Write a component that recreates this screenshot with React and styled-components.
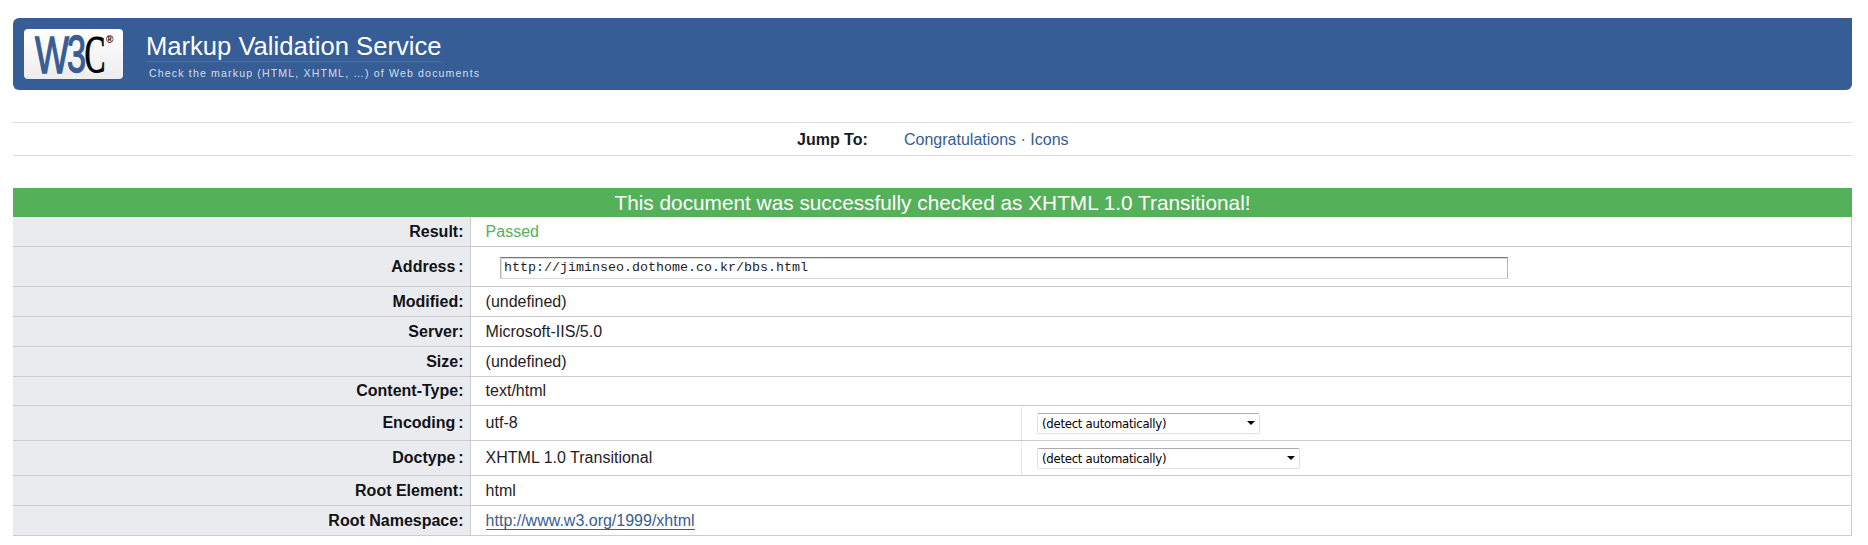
import React from "react";
import styled, { createGlobalStyle } from "styled-components";

const GlobalStyle = createGlobalStyle`
  * { box-sizing: border-box; }
  body {
    margin: 0;
    background: #fff;
    color: #1f2126;
    font: 16px/20px "Liberation Sans", Arial, sans-serif;
  }
  a { color: #365d95; text-decoration: none; }
`;

const Page = styled.div`
  padding: 18px 16px 9px 13px;
`;

const Banner = styled.header`
  display: flex;
  align-items: flex-start;
  height: 72px;
  padding: 11px 11px 0;
  background: #365d95;
  border-radius: 6px 0 6px 6px;
`;

const LogoBadge = styled.div`
  width: 99px;
  height: 50px;
  border-radius: 4px;
  background: linear-gradient(#fff, #ededee);
  svg { display: block; overflow: visible; }
`;

const Titles = styled.div`
  margin-left: 23px;
  color: #fff;
`;

const Title = styled.h1`
  width: 296px;
  height: 33px;
  margin: 0;
  border-bottom: 1px solid #4a709f;
  font-size: 25.6px;
  font-weight: normal;
  line-height: 34px;
  white-space: nowrap;
`;

const Tagline = styled.p`
  margin: 3px 0 0 3px;
  font-size: 10.6px;
  line-height: 16px;
  letter-spacing: 1.14px;
  color: #d3deeb;
  white-space: nowrap;
`;

const JumpBar = styled.nav`
  display: flex;
  align-items: center;
  height: 34px;
  margin: 32px 0;
  padding: 1px 0 0 784px;
  border: solid #dcdcdc;
  border-width: 1px 0;
  b { width: 107px; color: #1a1b1e; }
`;

const Links = styled.span`
  color: #365d95;
`;

const Report = styled.section`
  border-right: 1px solid #ccc;
`;

const Verdict = styled.h2`
  height: 29px;
  margin: 0 -1px 0 0;
  background: #55b05a;
  color: #fff;
  font-size: 20.8px;
  font-weight: normal;
  line-height: 30px;
  text-align: center;
`;

const Row = styled.div`
  display: grid;
  grid-template-columns: 458px ${(p) => (p.$split ? "550px 1fr" : "1fr")};
  height: ${(p) => p.$height}px;
  border-bottom: 1px solid #ccc;
`;

const Label = styled.div`
  display: flex;
  align-items: center;
  justify-content: flex-end;
  padding-right: 6.5px;
  background: #eaebee;
  border-right: 1px solid #ccc;
  color: #111218;
  font-weight: bold;
  word-spacing: ${(p) => (p.$tight ? "-1.6px" : "normal")};
`;

const Value = styled.div`
  display: flex;
  align-items: center;
  padding-left: 14.6px;
  color: ${(p) => (p.$passed ? "#55b05a" : "inherit")};
  a { border-bottom: 1px solid #365d95; line-height: 17px; }
`;

const Choice = styled.div`
  display: flex;
  align-items: center;
  padding-left: 15px;
  border-left: 1px solid #eaebee;
`;

const AddressField = styled.input`
  width: 1008px;
  height: 22px;
  margin: 3px 0 0 14.4px;
  padding: 0 3px 1px;
  border: 1px solid #b8b8b8;
  border-top-color: #757575;
  border-bottom-color: #d9d9d9;
  border-radius: 0;
  box-shadow: inset 1px 1px #dedede;
  color: #1f2126;
  font: 13.33px "Liberation Mono", "Courier New", monospace;
`;

const Select = styled.div`
  display: flex;
  align-items: center;
  justify-content: space-between;
  width: ${(p) => p.$width}px;
  height: 21px;
  padding: 1px 4px 0;
  border: 1px solid #dfe2e8;
  border-top-color: #abadb3;
  border-radius: 2px;
  color: #000;
  font: 13px/18px "DejaVu Sans Condensed", Tahoma, sans-serif;
  letter-spacing: -0.26px;
  &::after {
    content: "";
    margin-bottom: 1px;
    border: 4px solid transparent;
    border-top-color: #000;
    border-bottom: 0;
  }
`;

const rows = [
  { label: "Result:", value: "Passed", height: 30, passed: true },
  { label: "Address :", field: "http://jiminseo.dothome.co.kr/bbs.html", height: 40, tight: true },
  { label: "Modified:", value: "(undefined)", height: 30 },
  { label: "Server:", value: "Microsoft-IIS/5.0", height: 30 },
  { label: "Size:", value: "(undefined)", height: 30 },
  { label: "Content-Type:", value: "text/html", height: 29 },
  { label: "Encoding :", value: "utf-8", height: 35, select: 223, tight: true },
  { label: "Doctype :", value: "XHTML 1.0 Transitional", height: 35, select: 263, tight: true },
  { label: "Root Element:", value: "html", height: 30 },
  { label: "Root Namespace:", link: "http://www.w3.org/1999/xhtml", height: 30 },
];

function Logo() {
  return (
    <svg width="99" height="50" viewBox="0 0 99 50" role="img" aria-label="W3C">
      <g fill="#365d95" stroke="#365d95" fontFamily="Liberation Sans">
        <text transform="translate(11 43.5) scale(1 1.55)" fontSize="34" strokeWidth="0.9" textLength="34" lengthAdjust="spacingAndGlyphs">W</text>
        <text transform="translate(43 43) scale(1 1.5)" fontSize="34" strokeWidth="0.9" textLength="19" lengthAdjust="spacingAndGlyphs">3</text>
      </g>
      <text transform="translate(60.5 43) scale(1 1.5)" fontSize="35" fontFamily="Liberation Serif" stroke="#000" strokeWidth="0.6" textLength="21" lengthAdjust="spacingAndGlyphs">C</text>
      <text x="82" y="14" fontSize="10" fontWeight="bold" fontFamily="Liberation Sans">®</text>
    </svg>
  );
}

export default function App() {
  return (
    <>
      <GlobalStyle />
      <Page>
        <Banner>
          <LogoBadge><Logo /></LogoBadge>
          <Titles>
            <Title>Markup Validation Service</Title>
            <Tagline>Check the markup (HTML, XHTML, …) of Web documents</Tagline>
          </Titles>
        </Banner>
        <JumpBar>
          <b>Jump To:</b>
          <Links><a href="#congrats">Congratulations</a> · <a href="#icons">Icons</a></Links>
        </JumpBar>
        <Report>
          <Verdict>This document was successfully checked as XHTML 1.0 Transitional!</Verdict>
          {rows.map((r) => (
            <Row key={r.label} $height={r.height} $split={!!r.select}>
              <Label $tight={r.tight}>{r.label}</Label>
              <Value $passed={r.passed}>
                {r.value}
                {r.field && <AddressField defaultValue={r.field} />}
                {r.link && <a href="#namespace">{r.link}</a>}
              </Value>
              {r.select && <Choice><Select $width={r.select}>(detect automatically)</Select></Choice>}
            </Row>
          ))}
        </Report>
      </Page>
    </>
  );
}
